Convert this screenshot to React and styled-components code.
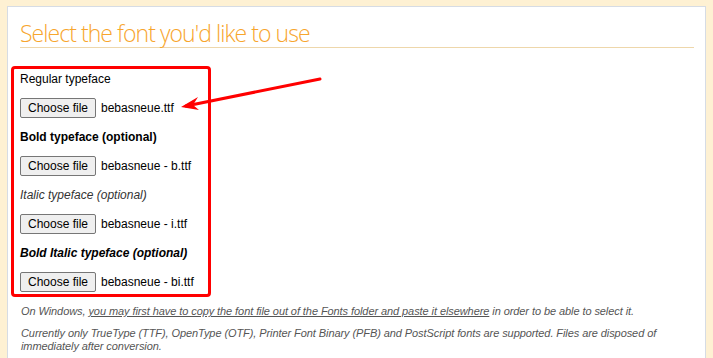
import React from 'react';
import styled, { createGlobalStyle } from 'styled-components';

const GlobalStyle = createGlobalStyle`
  html, body {
    margin: 0;
    padding: 0;
    background: #fef1d3;
    overflow: hidden;
  }
  body {
    font-family: Arial, "Liberation Sans", sans-serif;
  }
`;

const fonts = [
  { label: 'Regular typeface', file: 'bebasneue.ttf', bold: false, italic: false },
  { label: 'Bold typeface (optional)', file: 'bebasneue - b.ttf', bold: true, italic: false },
  { label: 'Italic typeface (optional)', file: 'bebasneue - i.ttf', bold: false, italic: true },
  { label: 'Bold Italic typeface (optional)', file: 'bebasneue - bi.ttf', bold: true, italic: true },
];

const App = () => (
  <Page>
    <GlobalStyle />
    <Panel>
      <Heading>Select the font you'd like to use</Heading>

      <UploadBox>
        {fonts.map(({ label, file, bold, italic }) => (
          <Group key={label}>
            <FieldLabel $bold={bold} $italic={italic}>{label}</FieldLabel>
            <FileRow>
              <ChooseButton type='button'>Choose file</ChooseButton>
              <FileName>{file}</FileName>
            </FileRow>
          </Group>
        ))}
      </UploadBox>

      <Note>
        On Windows, <u>you may first have to copy the font file out of the Fonts folder and paste it elsewhere</u> in order to be able to select it.
      </Note>
      <Note>
        Currently only TrueType (TTF), OpenType (OTF), Printer Font Binary (PFB) and PostScript fonts are supported. Files are disposed of immediately after conversion.
      </Note>
    </Panel>

    <Arrow width='713' height='358' viewBox='0 0 713 358'>
      <line x1='320' y1='79' x2='186' y2='106' stroke='#ff0000' strokeWidth='3' strokeLinecap='round' />
      <polygon points='181,107 198,97 193,105 199,110' fill='#ff0000' />
    </Arrow>
  </Page>
);

const Page = styled.div`
  position: relative;
  width: 713px;
  height: 358px;
  padding: 6px 7px 0;
  box-sizing: border-box;
`;

const Panel = styled.div`
  height: 400px;
  background: #ffffff;
  border: 1px solid #d6dce4;
  box-sizing: border-box;
`;

const Heading = styled.h1`
  margin: 0 11px 0 12px;
  padding: 13px 0 0;
  height: 41px;
  box-sizing: border-box;
  border-bottom: 1px solid #eed7ab;
  font-family: "Open Sans", sans-serif;
  font-weight: 300;
  font-size: 23px;
  line-height: 26px;
  letter-spacing: -0.95px;
  color: #f7a52d;
  white-space: nowrap;
`;

const UploadBox = styled.div`
  width: 200px;
  margin: 18px 0 0 3px;
  padding: 2px 6px 2px;
  box-sizing: border-box;
  border: 3px solid #ff0000;
  border-radius: 4px;
  display: flex;
  flex-direction: column;
`;

const Group = styled.div`
  display: flex;
  flex-direction: column;
  gap: 11px;

  &:not(:last-child) {
    margin-bottom: 11px;
  }
`;

const FieldLabel = styled.div`
  font-size: 12px;
  line-height: 16px;
  color: ${({ $italic, $bold }) => ($italic && !$bold ? '#333333' : '#000000')};
  font-weight: ${({ $bold }) => ($bold ? 700 : 400)};
  font-style: ${({ $italic }) => ($italic ? 'italic' : 'normal')};
`;

const FileRow = styled.div`
  display: flex;
  align-items: center;
  gap: 5px;
  height: 20px;
`;

const ChooseButton = styled.button`
  height: 20px;
  width: 76px;
  padding: 0;
  font-family: Arial, "Liberation Sans", sans-serif;
  font-size: 12px;
  color: #000;
  background: #efefef;
  border: 1px solid #767676;
  border-radius: 2px;
`;

const FileName = styled.span`
  font-size: 12px;
  color: #000;
`;

const Note = styled.p`
  margin: 8px 24px 9px 13px;
  font-size: 11px;
  line-height: 13px;
  letter-spacing: -0.08px;
  font-style: italic;
  color: #555555;

  & + & {
    margin-top: 0;
  }

  u {
    text-decoration: underline;
  }
`;

const Arrow = styled.svg`
  position: absolute;
  top: 0;
  left: 0;
  pointer-events: none;
`;

export default App;
